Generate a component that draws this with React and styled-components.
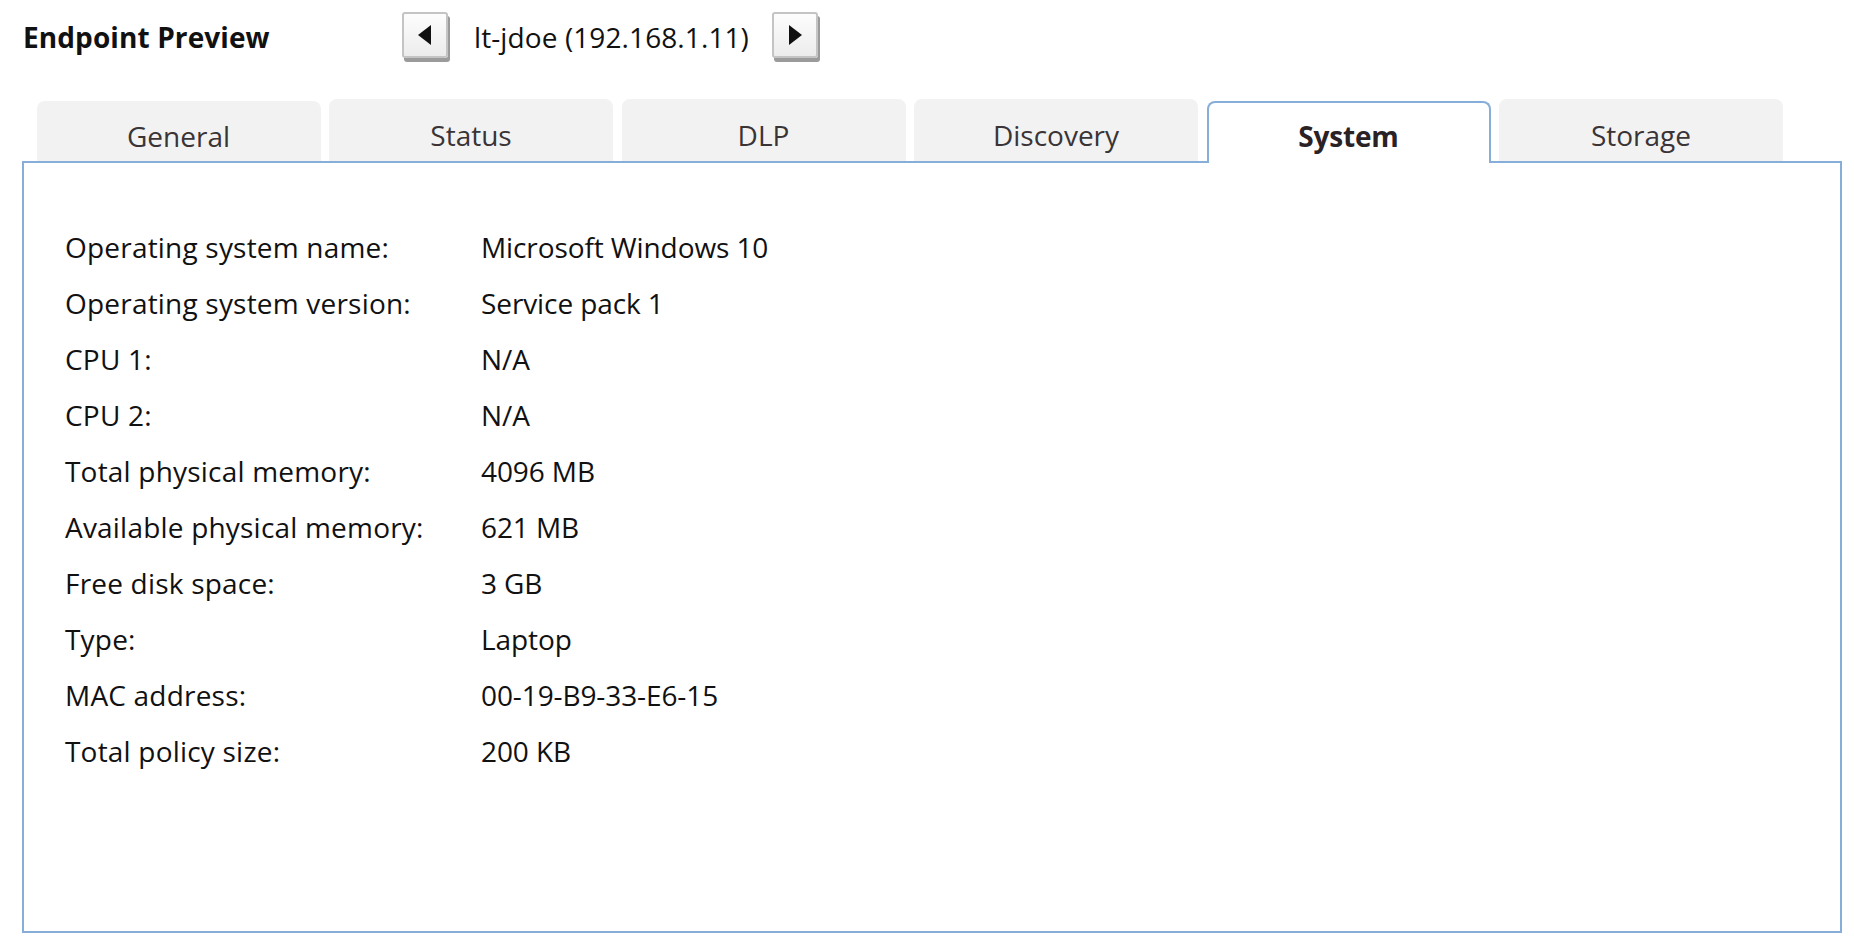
import React from "react";
import styled, { createGlobalStyle } from "styled-components";

const Global = createGlobalStyle`
  html, body { margin: 0; padding: 0; background: #ffffff; }
  body { font-family: "Open Sans", Lato, sans-serif; color: #111; }
`;

const Page = styled.div`
  width: 1854px;
  height: 946px;
  display: flex;
  flex-direction: column;
`;

const Header = styled.div`
  height: 74px;
  display: flex;
  align-items: center;
  padding-left: 23px;
`;

const Title = styled.h1`
  margin: 0;
  width: 379px;
  font-size: 28px;
  font-weight: 700;
  color: #111;
  letter-spacing: 0.1px;
`;

const Nav = styled.div`
  display: flex;
  align-items: center;
  gap: 23px;
`;

const NavButton = styled.button`
  width: 46px;
  height: 46px;
  padding: 0;
  margin: 0 3px 4px 0;
  display: flex;
  align-items: center;
  justify-content: center;
  border: 2px solid #c4c4c4;
  border-radius: 3px;
  background: linear-gradient(#fdfdfd, #ececec);
  box-shadow: 2px 4px 0 #9b9b9b;
  cursor: pointer;
`;

const NavText = styled.span`
  font-size: 28px;
  color: #111;
  letter-spacing: 0.1px;
`;

const TabsArea = styled.div`
  margin-left: 22px;
  width: 1820px;
  margin-top: 25px;
  display: flex;
  flex-direction: column;
`;

const TabBar = styled.div`
  display: flex;
  align-items: flex-end;
  gap: 8.5px;
  padding-left: 14.5px;
  position: relative;
  z-index: 1;
`;

const Tab = styled.div`
  width: 284px;
  height: ${(p) => (p.$low ? "60px" : "62px")};
  box-sizing: border-box;
  margin-bottom: ${(p) => (p.$active ? "-2px" : "0")};
  border-radius: 8px 8px 0 0;
  background: ${(p) => (p.$active ? "#ffffff" : "#f2f2f2")};
  border: ${(p) => (p.$active ? "2px solid #86aed8" : "none")};
  border-bottom: none;
  display: flex;
  justify-content: center;
  align-items: flex-end;
  padding-bottom: ${(p) => (p.$active ? "9px" : p.$low ? "7px" : "8px")};
  font-size: 28px;
  line-height: 36px;
  font-weight: ${(p) => (p.$active ? 700 : 400)};
  letter-spacing: ${(p) => (p.$active ? "-0.2px" : "0")};
  color: ${(p) => (p.$active ? "#2a2225" : "#3a3436")};
`;

const Panel = styled.div`
  height: 772px;
  box-sizing: border-box;
  border: 2px solid #86aed8;
  padding: 56px 0 0 41px;
`;

const InfoGrid = styled.div`
  display: grid;
  grid-template-columns: 416px auto;
  grid-auto-rows: 56px;
  align-items: center;
  justify-content: start;
`;

const Label = styled.div`
  font-size: 28px;
  color: #111;
  letter-spacing: 0.2px;
`;

const Value = styled.div`
  font-size: 28px;
  color: #111;
  letter-spacing: -0.1px;
`;

const Arrow = ({ dir }) => (
  <svg width="14" height="20" viewBox="0 0 14 20">
    {dir === "left" ? (
      <polygon points="13,0 13,20 0,10" fill="#111" />
    ) : (
      <polygon points="1,0 1,20 14,10" fill="#111" />
    )}
  </svg>
);

const tabs = ["General", "Status", "DLP", "Discovery", "System", "Storage"];

const rows = [
  ["Operating system name:", "Microsoft Windows 10"],
  ["Operating system version:", "Service pack 1"],
  ["CPU 1:", "N/A"],
  ["CPU 2:", "N/A"],
  ["Total physical memory:", "4096 MB"],
  ["Available physical memory:", "621 MB"],
  ["Free disk space:", "3 GB"],
  ["Type:", "Laptop"],
  ["MAC address:", "00-19-B9-33-E6-15"],
  ["Total policy size:", "200 KB"],
];

export default function App() {
  return (
    <Page>
      <Global />
      <Header>
        <Title>Endpoint Preview</Title>
        <Nav>
          <NavButton aria-label="Previous">
            <Arrow dir="left" />
          </NavButton>
          <NavText>lt-jdoe (192.168.1.11)</NavText>
          <NavButton aria-label="Next">
            <Arrow dir="right" />
          </NavButton>
        </Nav>
      </Header>
      <TabsArea>
        <TabBar>
          {tabs.map((t, i) => (
            <Tab key={t} $active={t === "System"} $low={i === 0}>
              {t}
            </Tab>
          ))}
        </TabBar>
        <Panel>
          <InfoGrid>
            {rows.map(([l, v]) => (
              <React.Fragment key={l}>
                <Label>{l}</Label>
                <Value>{v}</Value>
              </React.Fragment>
            ))}
          </InfoGrid>
        </Panel>
      </TabsArea>
    </Page>
  );
}
